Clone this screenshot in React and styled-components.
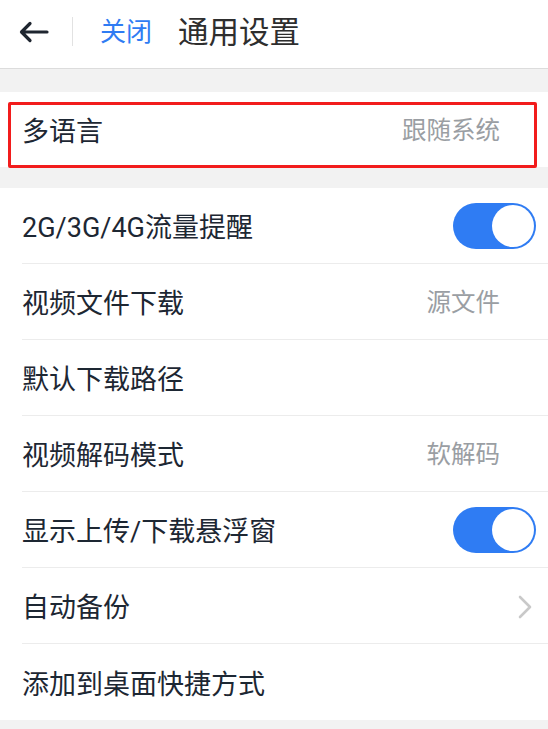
import React from "react";
import styled, { createGlobalStyle } from "styled-components";

const Global = createGlobalStyle`
  html, body { margin: 0; padding: 0; background: #f2f2f2; }
  body { font-family: Roboto, "Noto Sans CJK SC", sans-serif; }
  * { box-sizing: border-box; }
`;

const Page = styled.div`
  width: 548px;
  height: 729px;
  background: #f2f2f2;
  display: flex;
  flex-direction: column;
  overflow: hidden;
`;

const Header = styled.header`
  height: 69px;
  background: #fff;
  border-bottom: 1px solid #dcdcdc;
  display: flex;
  align-items: center;
  padding-left: 19px;
  flex-shrink: 0;
`;

const BackButton = styled.div`
  width: 30px;
  height: 24px;
  display: flex;
  align-items: center;
  margin-top: -4px;
`;

const Divider = styled.div`
  width: 1px;
  height: 29px;
  background: #e2e2e2;
  margin: -6px 27px 0 23px;
`;

const CloseLink = styled.span`
  font-size: 26px;
  color: #2f7cf3;
  line-height: 1;
  margin-top: -5px;
`;

const Title = styled.h1`
  margin: -2px 0 0 26px;
  font-size: 30.5px;
  font-weight: 400;
  color: #2e2e2e;
  line-height: 1;
`;

const Group = styled.section`
  background: #fff;
  margin-top: ${(p) => p.$gap}px;
  position: relative;
  flex-shrink: 0;
`;

const Row = styled.div`
  height: ${(p) => p.$h || 76}px;
  margin-left: 22px;
  padding-right: 48px;
  display: flex;
  align-items: center;
  justify-content: space-between;
  border-bottom: ${(p) => (p.$last ? "none" : "1px solid #ececec")};
`;

const Label = styled.span`
  font-size: 27px;
  color: #1d2733;
  line-height: 1;
  margin-top: 6px;
`;

const Value = styled.span`
  font-size: 24.5px;
  color: #9a9ea3;
  line-height: 1;
  margin-top: 4px;
`;

const Toggle = styled.div`
  width: 83px;
  height: 46px;
  border-radius: 23px;
  background: #2f7cf3;
  position: relative;
  margin-right: -36px;
  &::after {
    content: "";
    position: absolute;
    right: 2px;
    top: 2px;
    width: 42px;
    height: 42px;
    border-radius: 50%;
    background: #fff;
  }
`;

const Chevron = styled.svg`
  margin-right: -32px;
  margin-top: 3px;
`;

const Highlight = styled.div`
  position: absolute;
  left: 8px;
  top: 10px;
  width: 529px;
  height: 66px;
  border: 3px solid #f21c1c;
  border-radius: 2px;
  pointer-events: none;
`;

const rows = [
  { label: "2G/3G/4G流量提醒", kind: "toggle" },
  { label: "视频文件下载", value: "源文件" },
  { label: "默认下载路径" },
  { label: "视频解码模式", value: "软解码" },
  { label: "显示上传/下载悬浮窗", kind: "toggle" },
  { label: "自动备份", kind: "chevron" },
  { label: "添加到桌面快捷方式" },
];

export default function App() {
  return (
    <>
      <Global />
      <Page>
        <Header>
          <BackButton>
            <svg width="30" height="22" viewBox="0 0 30 22" fill="none">
              <path
                d="M28 11H3M11 2.5L2.5 11L11 19.5"
                stroke="#1f2630"
                strokeWidth="3.2"
                strokeLinecap="round"
                strokeLinejoin="round"
              />
            </svg>
          </BackButton>
          <Divider />
          <CloseLink>关闭</CloseLink>
          <Title>通用设置</Title>
        </Header>

        <Group $gap={23}>
          <Row $h={75} $last>
            <Label>多语言</Label>
            <Value>跟随系统</Value>
          </Row>
          <Highlight />
        </Group>

        <Group $gap={21}>
          {rows.map((r, i) => (
            <Row key={r.label} $last={i === rows.length - 1}>
              <Label>{r.label}</Label>
              {r.value && <Value>{r.value}</Value>}
              {r.kind === "toggle" && <Toggle />}
              {r.kind === "chevron" && (
                <Chevron width="14" height="24" viewBox="0 0 14 24" fill="none">
                  <path
                    d="M2 2L12 12L2 22"
                    stroke="#c9c9c9"
                    strokeWidth="2.6"
                    strokeLinecap="round"
                    strokeLinejoin="round"
                  />
                </Chevron>
              )}
            </Row>
          ))}
        </Group>
      </Page>
    </>
  );
}
